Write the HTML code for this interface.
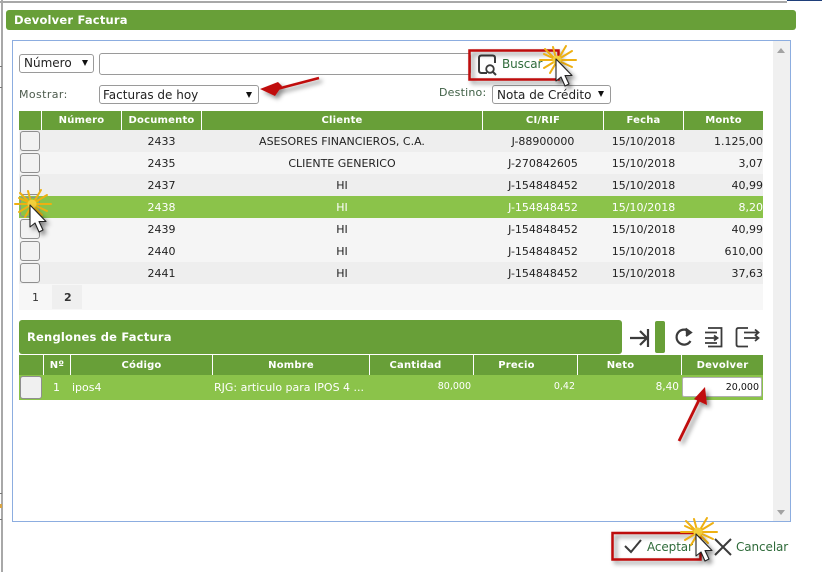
<!DOCTYPE html>
<html><head><meta charset="utf-8"><style>
html,body{margin:0;padding:0;background:#fff;width:822px;height:572px;overflow:hidden}
body{position:relative;font-family:"DejaVu Sans","Liberation Sans",sans-serif;font-size:11px;color:#222}
div{position:absolute;box-sizing:border-box;white-space:nowrap}
.sel{background:#fff;border:1px solid #9a9a9a;border-radius:3px;font-size:12px;color:#222;line-height:18px;padding-left:4px}
.sel i{position:absolute;top:5px;width:0;height:0;border-left:3.5px solid transparent;border-right:3.5px solid transparent;border-top:6px solid #111}
.h{background:#689f38;color:#fff;font-weight:bold;font-size:10px;text-align:center;height:19px;line-height:20px;top:111px;letter-spacing:.2px}
.h2{background:#689f38;color:#fff;font-weight:bold;font-size:10px;text-align:center;height:20px;line-height:21px;top:355px;letter-spacing:.2px}
.row{left:19px;width:744px;height:22px}
.c{font-size:11px;line-height:23px;text-align:center;top:0;height:22px;color:#222}
.r{text-align:right}
.chk{left:1px;width:20px;height:20px;top:1px;background:#f2f2f2;border:1px solid #8f8f8f;border-radius:3px;z-index:3}
.w{color:#fff}
.lab{color:#4d5b4d;font-size:11px}
.g{color:#2f6b3a;font-size:12px}
</style></head><body>
<div style="left:392px;top:-9px;font-size:10px;color:#555">Añadir la Línea del Artículo</div>
<div style="left:1px;top:0;width:2px;height:572px;background:#a8a8a8"></div>
<div style="left:0;top:1px;width:787px;height:2px;background:#a8a8a8"></div>
<div style="left:787px;top:0;width:35px;height:1px;background:#1f3f7a"></div>
<div style="left:0;top:66px;width:2px;height:1px;background:#777"></div>
<div style="left:0;top:87px;width:2px;height:1px;background:#777"></div>
<div style="left:0;top:493px;width:2px;height:1px;background:#777"></div>
<div style="left:0;top:504px;width:2px;height:4px;background:#d9a441"></div>
<div style="left:0;top:519px;width:2px;height:1px;background:#777"></div>

<div style="left:6px;top:10px;width:790px;height:20px;background:#689f38;border-radius:3px;color:#fff;font-weight:bold;font-size:11.5px;line-height:20px;padding-left:8px;letter-spacing:.2px">Devolver Factura</div>

<div style="left:12px;top:40px;width:779px;height:482px;border:1px solid #8cade0;background:#fff"></div>
<div style="left:773px;top:41px;width:17px;height:480px;background:#f0f0f0"></div>
<div style="left:777px;top:48px;width:0;height:0;border-left:4px solid transparent;border-right:4px solid transparent;border-bottom:5px solid #a3a3a3"></div>
<div style="left:777px;top:510px;width:0;height:0;border-left:4px solid transparent;border-right:4px solid transparent;border-top:5px solid #a3a3a3"></div>

<div class="sel" style="left:19px;top:54px;width:75px;height:19px;line-height:17px">Número<i style="left:62px;top:5px"></i></div>
<div style="left:99px;top:53px;width:372px;height:22px;background:#fff;border:1px solid #9a9a9a;border-radius:3px"></div>
<div class="lab" style="left:19px;top:88px;letter-spacing:.4px">Mostrar:</div>
<div class="sel" style="left:99px;top:85px;width:160px;height:19px;line-height:18px;padding-left:3px">Facturas de hoy<i style="left:146px;top:6px"></i></div>
<div class="lab" style="left:439px;top:86px;color:#3f5f45;letter-spacing:.2px">Destino:</div>
<div class="sel" style="left:492px;top:85px;width:119px;height:19px;line-height:18px">Nota de Crédito<i style="left:105px;top:5px"></i></div>
<div class="g" style="left:502px;top:57px;letter-spacing:-.1px">Buscar</div>

<div class="h" style="left:19px;width:22px"></div>
<div class="h" style="left:42px;width:79px">Número</div>
<div class="h" style="left:122px;width:79px">Documento</div>
<div class="h" style="left:202px;width:280px">Cliente</div>
<div class="h" style="left:483px;width:120px">CI/RIF</div>
<div class="h" style="left:604px;width:79px">Fecha</div>
<div class="h" style="left:684px;width:79px">Monto</div>

<div class="row" style="top:130px;background:#eeeeee"><div class="chk"></div><div class="c" style="left:103px;width:79px">2433</div><div class="c" style="left:183px;width:280px">ASESORES FINANCIEROS, C.A.</div><div class="c" style="left:464px;width:120px">J-88900000</div><div class="c" style="left:585px;width:79px">15/10/2018</div><div class="c r" style="left:665px;width:79px">1.125,00</div></div>
<div class="row" style="top:152px;background:#f5f5f5"><div class="chk"></div><div class="c" style="left:103px;width:79px">2435</div><div class="c" style="left:183px;width:280px">CLIENTE GENERICO</div><div class="c" style="left:464px;width:120px">J-270842605</div><div class="c" style="left:585px;width:79px">15/10/2018</div><div class="c r" style="left:665px;width:79px">3,07</div></div>
<div class="row" style="top:174px;background:#eeeeee"><div class="chk"></div><div class="c" style="left:103px;width:79px">2437</div><div class="c" style="left:183px;width:280px">HI</div><div class="c" style="left:464px;width:120px">J-154848452</div><div class="c" style="left:585px;width:79px">15/10/2018</div><div class="c r" style="left:665px;width:79px">40,99</div></div>
<div class="row" style="top:196px;background:#8bc34a"><div class="chk" style="background:#8bc34a"></div><div class="c w" style="left:103px;width:79px">2438</div><div class="c w" style="left:183px;width:280px">HI</div><div class="c w" style="left:464px;width:120px">J-154848452</div><div class="c w" style="left:585px;width:79px">15/10/2018</div><div class="c w r" style="left:665px;width:79px">8,20</div></div>
<div class="row" style="top:218px;background:#f5f5f5"><div class="chk"></div><div class="c" style="left:103px;width:79px">2439</div><div class="c" style="left:183px;width:280px">HI</div><div class="c" style="left:464px;width:120px">J-154848452</div><div class="c" style="left:585px;width:79px">15/10/2018</div><div class="c r" style="left:665px;width:79px">40,99</div></div>
<div class="row" style="top:240px;background:#f5f5f5"><div class="chk"></div><div class="c" style="left:103px;width:79px">2440</div><div class="c" style="left:183px;width:280px">HI</div><div class="c" style="left:464px;width:120px">J-154848452</div><div class="c" style="left:585px;width:79px">15/10/2018</div><div class="c r" style="left:665px;width:79px">610,00</div></div>
<div class="row" style="top:262px;background:#eeeeee"><div class="chk"></div><div class="c" style="left:103px;width:79px">2441</div><div class="c" style="left:183px;width:280px">HI</div><div class="c" style="left:464px;width:120px">J-154848452</div><div class="c" style="left:585px;width:79px">15/10/2018</div><div class="c r" style="left:665px;width:79px">37,63</div></div>

<div style="left:19px;top:284px;width:744px;height:26px;background:#f7f7f7"></div>
<div style="left:52px;top:285px;width:30px;height:24px;background:#efefef"></div>
<div style="left:32px;top:291px;font-size:11px;color:#333">1</div>
<div style="left:64px;top:291px;font-size:11px;color:#333;font-weight:bold">2</div>

<div style="left:19px;top:320px;width:603px;height:34px;background:#689f38;border-radius:3px;color:#fff;font-weight:bold;font-size:11.5px;line-height:34px;padding-left:8px;letter-spacing:.2px">Renglones de Factura</div>
<div style="left:655px;top:321px;width:10px;height:32px;background:#689f38;border-radius:2px"></div>

<div class="h2" style="left:19px;width:24px"></div>
<div class="h2" style="left:44px;width:26px">Nº</div>
<div class="h2" style="left:71px;width:141px">Código</div>
<div class="h2" style="left:213px;width:156px">Nombre</div>
<div class="h2" style="left:370px;width:103px;padding-right:12px">Cantidad</div>
<div class="h2" style="left:474px;width:103px;padding-right:18px">Precio</div>
<div class="h2" style="left:578px;width:103px;padding-right:18px">Neto</div>
<div class="h2" style="left:682px;width:81px">Devolver</div>

<div style="left:19px;top:375px;width:744px;height:25px;background:#8bc34a"></div>
<div style="left:20px;top:376px;width:22px;height:23px;background:#f0f0f0;border:1px solid #8f8f8f;border-radius:3px"></div>
<div class="w" style="left:53px;top:381px">1</div>
<div class="w" style="left:72px;top:381px">ipos4</div>
<div class="w" style="left:214px;top:381px">RJG: articulo para IPOS 4 ...</div>
<div class="w" style="left:370px;top:381px;width:101px;text-align:right;font-size:9.500px">80,000</div>
<div class="w" style="left:474px;top:381px;width:101px;text-align:right;font-size:9.500px">0,42</div>
<div class="w" style="left:578px;top:381px;width:101px;text-align:right;font-size:10.500px">8,40</div>
<div style="left:682px;top:377px;width:80px;height:20px;background:#fff;border:1px solid #b0b0b0;border-radius:2px;font-size:9.500px;line-height:19px;text-align:right;padding-right:2px;color:#111">20,000</div>

<div class="g" style="left:647px;top:540px;letter-spacing:-.1px">Aceptar</div>
<div class="g" style="left:736px;top:540px;letter-spacing:-.1px">Cancelar</div>

<svg style="position:absolute;left:0;top:0;z-index:5" width="822" height="572" viewBox="0 0 822 572">
<defs>
<filter id="s" x="-40%" y="-40%" width="200%" height="200%"><feDropShadow dx="3" dy="3" stdDeviation="2.500" flood-color="#000" flood-opacity=".45"/></filter>
<g id="cur"><path d="M0 0V22L5 18L9 27L13 25L9 16.500H16Z" fill="#fff" stroke="#222" stroke-width="1.100" stroke-linejoin="round"/></g>
<g id="star" fill="none" stroke="#eeb012" stroke-width="2" stroke-linecap="round"><path d="M-12 -11L10 11M-4 -13L3 13M9 -14L-7 13M15 -9L-13 8M19 0L-17 0M15 7L-13 -6"/><circle r="4.500" fill="#f2cf3c" stroke="none"/></g>
</defs>

<g fill="none" stroke="#3b3b3b">
<path d="M487 73H481.500Q479 73 479 70.500V58Q479 55.500 481.500 55.500H492.500Q495 55.500 495 58V63" stroke-width="2"/>
<circle cx="490" cy="69" r="3.800" stroke-width="1.800"/><path d="M493 72L496 75" stroke-width="2"/>
<path d="M630 338H647M640 331L647 338L640 345M648 329V347" stroke-width="2.200"/>
<path d="M690 332.500A7.500 7.500 0 1 0 690.500 341" stroke-width="2.200"/><path d="M685.500 328.500L691 332.500L686 336" stroke-width="2" fill="#3b3b3b"/>
<path d="M708 328H721.500V346.500H708M705 332.500H717M705 338H717M705 343H717M714 335.500L717.500 338L714 340.500" stroke-width="1.800"/>
<path d="M748 328H738.500Q736.500 328 736.500 330V344.500Q736.500 346.500 738.500 346.500H748M744 332.500H758M744 338H758M755 329.500L758.500 332.500L755 335.500M755 335L758.500 338L755 341" stroke-width="1.800"/>
<path d="M625 546L631 552L641 540" stroke-width="2"/>
<path d="M715 539L731 555M731 539L715 555" stroke-width="2"/>
</g>

<rect x="469.500" y="50.500" width="89" height="29" fill="none" stroke="#bd0a0a" stroke-width="2.500" filter="url(#s)"/>
<rect x="612.500" y="533" width="88" height="26.500" fill="none" stroke="#bd0a0a" stroke-width="2.500" filter="url(#s)"/>

<g filter="url(#s)"><path d="M319 78L277 89" stroke="#c00d0d" stroke-width="2.500"/><path d="M260 89L278 82L282 86L275 96Z" fill="#c00d0d"/></g>
<g filter="url(#s)"><path d="M679 441L699 400" stroke="#c00d0d" stroke-width="2.800"/><path d="M705 387L694 399L707 405Z" fill="#c00d0d"/></g>

<use href="#star" x="557" y="60"/>
<use href="#cur" x="556" y="59" filter="url(#s)"/>
<use href="#star" x="32" y="204"/>
<use href="#cur" x="30" y="205" filter="url(#s)"/>
<use href="#star" x="698" y="532"/>
<use href="#cur" x="696" y="534" filter="url(#s)"/>
</svg>
</body></html>
